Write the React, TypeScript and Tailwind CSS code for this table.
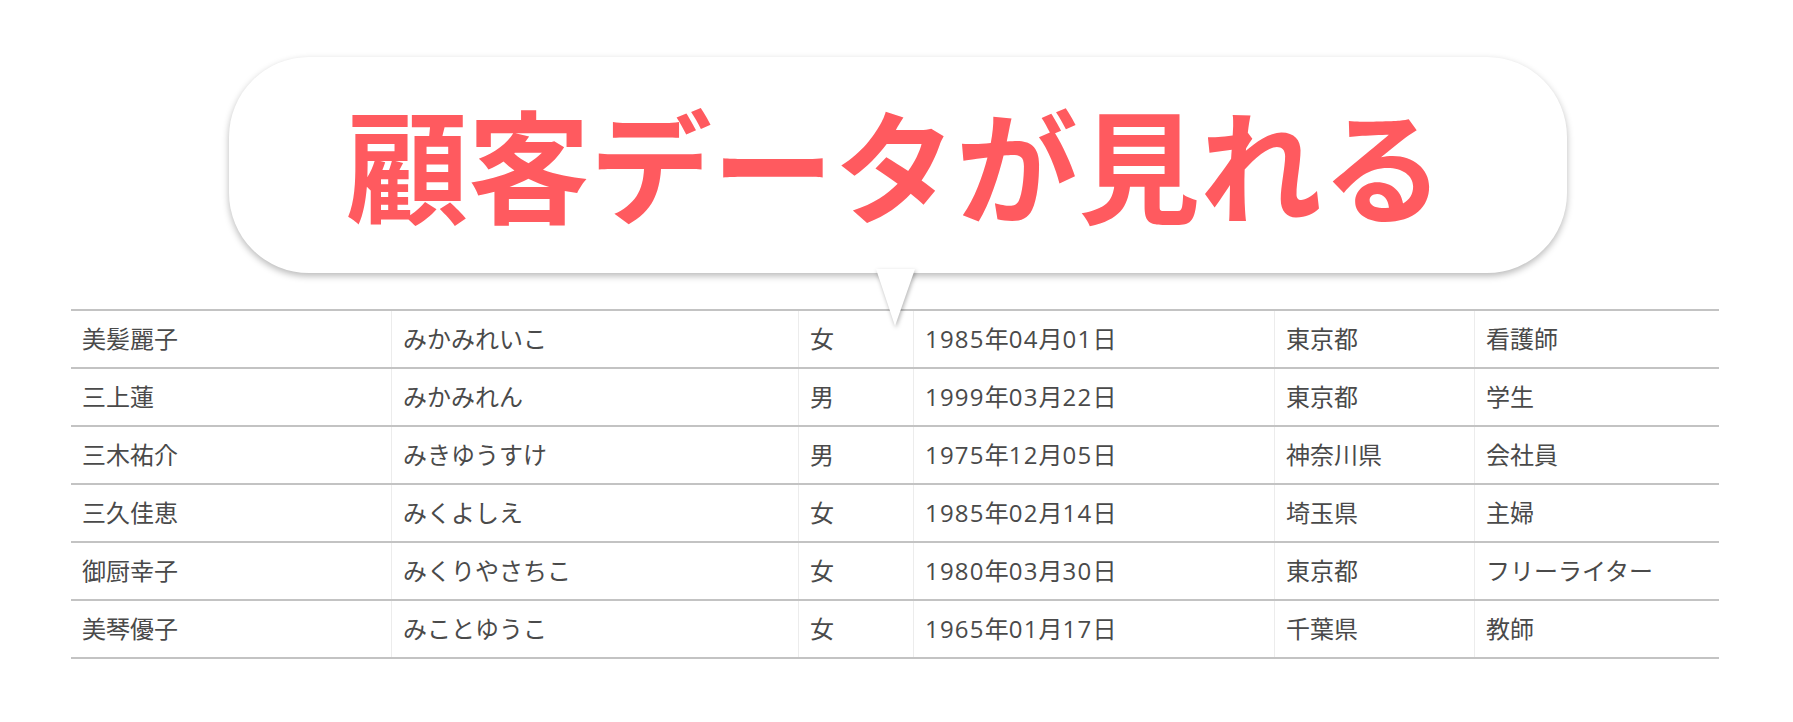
import React from 'react';

const rows = [
  ['美髪麗子', 'みかみれいこ', '女', '1985年04月01日', '東京都', '看護師'],
  ['三上蓮', 'みかみれん', '男', '1999年03月22日', '東京都', '学生'],
  ['三木祐介', 'みきゆうすけ', '男', '1975年12月05日', '神奈川県', '会社員'],
  ['三久佳恵', 'みくよしえ', '女', '1985年02月14日', '埼玉県', '主婦'],
  ['御厨幸子', 'みくりやさちこ', '女', '1980年03月30日', '東京都', 'フリーライター'],
  ['美琴優子', 'みことゆうこ', '女', '1965年01月17日', '千葉県', '教師'],
];

// digits in the reference font run a little wider than Open Sans
const Cell = ({ text }: { text: string }) => (
  <>
    {text.split(/(\d+)/).map((part, k) =>
      /^\d+$/.test(part) ? (
        <span key={k} className="tracking-[1.2px]">
          {part}
        </span>
      ) : (
        <span key={k}>{part}</span>
      )
    )}
  </>
);

const Bubble = () => (
  <div className="relative ml-[229px] w-[1338px] h-[216px] rounded-[80px] bg-white shadow-[0_3px_7px_rgba(0,0,0,0.28)] flex items-center justify-center">
    <h1 className="text-[122px] leading-none font-bold text-[#ff5a5f] font-['Noto_Sans_CJK_JP',sans-serif] -translate-x-[3px] -translate-y-[4px]">
      顧客データが見れる
    </h1>
    {/* tail */}
    <svg
      className="absolute left-[647px] top-[212px] z-10 drop-shadow-[1px_2px_2px_rgba(0,0,0,0.3)]"
      width="39"
      height="58"
      viewBox="0 0 39 58"
    >
      <polygon points="0,0 39,0 19,57" fill="#fff" />
    </svg>
  </div>
);

const DataTable = () => (
  <div className="ml-[71px] mt-[36px] w-[1648px] border-t-2 border-[#c3c3c3] font-['Open_Sans','Noto_Sans_CJK_JP',sans-serif] text-[24px] text-[#4a4a4a]">
    {rows.map((r, i) => (
      <div
        key={i}
        className="grid grid-cols-[321px_407px_115px_361px_200px_244px] h-[58px] border-b-2 border-[#c3c3c3]"
      >
        {r.map((c, j) => (
          <div
            key={j}
            className={`flex items-center pl-[11px] whitespace-nowrap ${j < 5 ? 'border-r border-[#ececec]' : ''}`}
          >
            <Cell text={c} />
          </div>
        ))}
      </div>
    ))}
  </div>
);

export default function App() {
  return (
    <div className="w-[1793px] h-[722px] bg-white pt-[57px] overflow-hidden">
      <Bubble />
      <DataTable />
    </div>
  );
}
